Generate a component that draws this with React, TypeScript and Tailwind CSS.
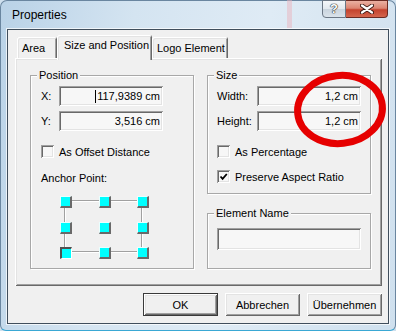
import React from "react";

const sunken =
  "shadow-[inset_1px_1px_0_#a0a0a0,inset_-1px_-1px_0_#ffffff,inset_2px_2px_0_#696969,inset_-2px_-2px_0_#e3e3e3]";
const raised =
  "shadow-[inset_1px_1px_0_#ffffff,inset_-1px_-1px_0_#696969,inset_2px_2px_0_#e3e3e3,inset_-2px_-2px_0_#a0a0a0]";

function Field({ value, caret, className }: { value: string; caret?: boolean; className: string }) {
  return (
    <div className={`bg-[#f7f7f7] ${sunken} flex items-center justify-end pr-[3px] ${className}`}>
      {caret && <span className="w-px h-[13px] bg-black mr-px" />}
      <span className="leading-[14px]">{value}</span>
    </div>
  );
}

function Group({ label, className, children }: { label: string; className: string; children?: React.ReactNode }) {
  return (
    <div className={`relative border border-[#a8a8a8] shadow-[inset_1px_1px_0_#ffffff,1px_1px_0_#ffffff] ${className}`}>
      <span className="absolute -top-[8px] left-[6px] px-[2px] bg-[#f0f0f0] leading-[14px]">{label}</span>
      {children}
    </div>
  );
}

function Check({ label, checked, className }: { label: string; checked?: boolean; className: string }) {
  return (
    <div className={`flex items-center h-[13px] ${className}`}>
      <div className={`w-[13px] h-[13px] bg-[#f7f7f7] ${sunken} flex items-center justify-center`}>
        {checked && (
          <svg width="9" height="9" viewBox="0 0 9 9">
            <polyline points="1.5,4.5 3.6,6.8 7.8,2" fill="none" stroke="#000" strokeWidth="1.8" />
          </svg>
        )}
      </div>
      <span className="ml-[5px] leading-[14px]">{label}</span>
    </div>
  );
}

function Sq({ pressed }: { pressed?: boolean }) {
  return pressed ? (
    <div className="w-[12px] h-[12px] bg-[#00ffff] border-l-2 border-t-2 border-r border-b border-l-[#505050] border-t-[#505050] border-r-[#ffffff] border-b-[#ffffff]" />
  ) : (
    <div className="w-[12px] h-[12px] bg-[#00ffff] border-r-2 border-b-2 border-t border-l border-r-[#696969] border-b-[#696969] border-t-[#e8ffff] border-l-[#e8ffff]" />
  );
}

function Anchor() {
  return (
    <div className="relative w-[89px] h-[63px] mt-[11px] ml-[19px]">
      <svg className="absolute inset-0" width="89" height="63">
        <line x1="10" y1="4.5" x2="80" y2="4.5" stroke="#a0a0a0" />
        <line x1="10" y1="5.5" x2="80" y2="5.5" stroke="#ffffff" />
        <line x1="10" y1="55.5" x2="80" y2="55.5" stroke="#a0a0a0" />
        <line x1="10" y1="56.5" x2="80" y2="56.5" stroke="#ffffff" />
        <line x1="4.5" y1="10" x2="4.5" y2="52" stroke="#a0a0a0" />
        <line x1="5.5" y1="10" x2="5.5" y2="52" stroke="#ffffff" />
        <line x1="81.5" y1="10" x2="81.5" y2="52" stroke="#a0a0a0" />
        <line x1="82.5" y1="10" x2="82.5" y2="52" stroke="#ffffff" />
      </svg>
      <div className="relative flex flex-col justify-between h-full">
        <div className="flex justify-between">
          <Sq />
          <Sq />
          <Sq />
        </div>
        <div className="flex justify-between">
          <Sq />
          <Sq />
          <Sq />
        </div>
        <div className="flex justify-between">
          <Sq pressed />
          <Sq />
          <Sq />
        </div>
      </div>
    </div>
  );
}

const tabBase =
  "flex items-start leading-[14px] rounded-t-[2px] bg-[#f0f0f0] shadow-[inset_1px_1px_0_#ffffff,inset_-1px_0_0_#696969,inset_2px_2px_0_#e3e3e3,inset_-2px_0_0_#a0a0a0]";

export default function App() {
  return (
    <div className="w-[396px] h-[331px] relative overflow-hidden bg-[#cfe0ee] font-['Liberation_Sans',Arial,sans-serif] text-[11px] text-black">
      <div className="flex flex-col h-full rounded-t-[7px] rounded-b-[6px] border border-[#6a86a0] border-b-[#3aa8d4] bg-[linear-gradient(100deg,#b9d2e7_0%,#d4e4f1_30%,#dfebf5_60%,#cfe0ee_100%)]">
        {/* title bar */}
        <div className="flex h-[28px] pl-[11px] pr-[7px]">
          <span className="self-center text-[12px] leading-[16px] text-[#000]">Properties</span>
          <div className="ml-auto flex -mt-px">
            <div className="w-[24px] h-[18px] rounded-bl-[4px] border border-[#6b7785] bg-[linear-gradient(180deg,#f4f7fa_0%,#e2e9ef_48%,#c9d4de_52%,#dae3eb_100%)] flex items-center justify-center">
              <span className="font-bold text-[13px] leading-[14px] text-white [text-shadow:0_0_1px_#222,0_0_1px_#222,0_0_1px_#222]">?</span>
            </div>
            <div className="w-[42px] h-[18px] rounded-br-[4px] border border-[#6a2a22] border-l-0 bg-[linear-gradient(180deg,#eab0a2_0%,#dc8572_45%,#c4432e_55%,#d4654d_100%)] flex items-center justify-center">
              <svg width="14" height="10" viewBox="0 0 14 10">
                <path d="M2 1.5 L12 8.5 M12 1.5 L2 8.5" stroke="#3a1712" strokeWidth="4" strokeLinecap="round" />
                <path d="M2 1.5 L12 8.5 M12 1.5 L2 8.5" stroke="#ffffff" strokeWidth="2.2" strokeLinecap="round" />
              </svg>
            </div>
          </div>
        </div>

        {/* client */}
        <div className="mx-[6px] mb-[6px] flex-1 border border-[#404e5c] shadow-[0_0_0_1px_rgba(255,255,255,0.7)] bg-[#f0f0f0] flex flex-col pt-[5px] pl-[7px] pr-[6px]">
          {/* tabs */}
          <div className="flex items-end h-[23px] pl-[2px]">
            <div className={`${tabBase} w-[40px] h-[21px] pt-[4px] pl-[5px]`}>Area</div>
            <div className={`${tabBase} relative z-10 w-[95px] h-[25px] -mb-[2px] pt-[3px] pl-[7px]`}>Size and Position</div>
            <div className={`${tabBase} w-[76px] h-[21px] pt-[4px] pl-[5px]`}>Logo Element</div>
          </div>

          {/* panel */}
          <div className={`h-[228px] bg-[#f0f0f0] ${raised} flex gap-[13px] pl-[15px] pt-[17px]`}>
            <Group label="Position" className="w-[164px] h-[194px] pt-[10px] pl-[10px]">
              <div className="flex items-center h-[20px]">
                <span className="w-[18px]">X:</span>
                <Field value="117,9389 cm" caret className="w-[104px] h-[20px]" />
              </div>
              <div className="flex items-center h-[20px] mt-[5px]">
                <span className="w-[18px]">Y:</span>
                <Field value="3,516 cm" className="w-[104px] h-[20px]" />
              </div>
              <Check label="As Offset Distance" className="mt-[14px]" />
              <div className="mt-[13px] leading-[14px]">Anchor Point:</div>
              <Anchor />
            </Group>

            <div className="flex flex-col gap-[19px]">
              <Group label="Size" className="w-[164px] h-[119px] pt-[10px] pl-[9px]">
                <div className="flex items-center h-[20px]">
                  <span className="w-[40px]">Width:</span>
                  <Field value="1,2 cm" className="w-[104px] h-[20px]" />
                </div>
                <div className="flex items-center h-[20px] mt-[5px]">
                  <span className="w-[40px]">Height:</span>
                  <Field value="1,2 cm" className="w-[104px] h-[20px]" />
                </div>
                <Check label="As Percentage" className="mt-[14px]" />
                <Check label="Preserve Aspect Ratio" checked className="mt-[12px]" />
              </Group>
              <Group label="Element Name" className="w-[164px] h-[56px] pt-[14px] pl-[9px]">
                <Field value="" className="w-[144px] h-[22px]" />
              </Group>
            </div>
          </div>

          {/* buttons */}
          <div className="flex justify-end gap-[7px] mt-[7px] h-[23px]">
            <div className={`w-[75px] h-[23px] border border-[#3a3a3a] bg-[#f0f0f0] ${raised} flex items-center justify-center leading-[14px]`}>OK</div>
            <div className={`w-[75px] h-[23px] bg-[#f0f0f0] ${raised} flex items-center justify-center leading-[14px]`}>Abbrechen</div>
            <div className={`w-[75px] h-[23px] bg-[#f0f0f0] ${raised} flex items-center justify-center leading-[14px]`}>Übernehmen</div>
          </div>
        </div>
      </div>

      {/* faint reflection stripe in the glass title bar */}
      <div className="absolute left-[287px] top-0 w-[5px] h-[28px] bg-[#eab4bd] opacity-50" />

      {/* red annotation ellipse */}
      <svg className="absolute left-[290px] top-[68px]" width="100" height="84" viewBox="0 0 100 84">
        <ellipse cx="50" cy="41.5" rx="42.5" ry="34" fill="none" stroke="#e60000" strokeWidth="7" transform="rotate(-6 50 41.5)" />
      </svg>
    </div>
  );
}
